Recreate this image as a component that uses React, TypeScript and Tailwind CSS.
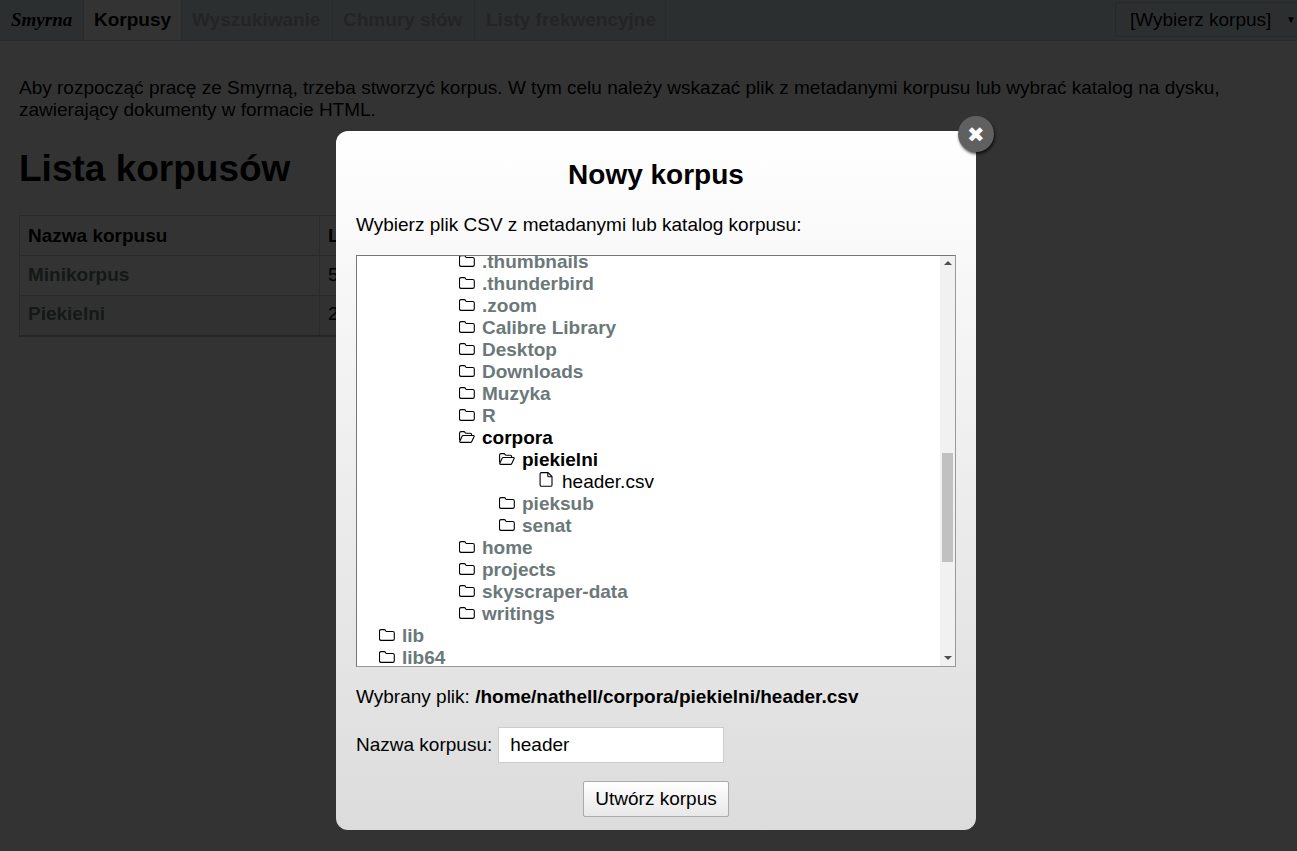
import React from "react";

const FolderIcon = () => (
  <svg width="16" height="12" viewBox="0 0 16 12" fill="none" stroke="#000" strokeWidth="1.1" className="shrink-0">
    <path d="M2 .6h3.2c.7 0 1 .3 1.4 1l.3.5c.2.3.4.4.8.4h6.1c.8 0 1.5.6 1.5 1.4v5.8c0 1-.7 1.7-1.6 1.7H2.2C1.2 11.4.5 10.700.5 9.800V2.100C.5 1.200 1.100.6 2 .6z" />
  </svg>
);

const OpenFolderIcon = () => (
  <svg width="16" height="12" viewBox="0 0 16 12" fill="none" stroke="#000" strokeWidth="1.1" className="shrink-0">
    <path d="M.6 9.600V1.900C.6 1.100 1.200.6 2 .6h2.800c.7 0 1 .3 1.300.9l.2.4c.1.3.4.4.7.4h4.300c.8 0 1.300.5 1.300 1.300v.9" />
    <path d="M.8 10.300l2.300-5c.2-.5.6-.8 1.200-.8h10.200c.6 0 .9.500.6 1.100l-2.300 4.900c-.2.5-.6.9-1.200.9H1.500c-.6 0-.9-.5-.7-1.100z" />
  </svg>
);

const FileIcon = () => (
  <svg width="16" height="15" viewBox="0 0 16 15" fill="none" stroke="#000" strokeWidth="1.1" className="shrink-0 -mt-[3px]">
    <path d="M2.500.6h6.500l4 4v8.300c0 .8-.6 1.400-1.400 1.400H2.500c-.8 0-1.400-.6-1.400-1.400V2c0-.8.6-1.400 1.400-1.400z" />
    <path d="M8.800.8v3c0 .6.4 1 1 1h3" />
  </svg>
);

type Row = { name: string; pad: string; kind: "closed" | "open" | "file" };

const rows: Row[] = [
  { name: ".thumbnails", pad: "pl-[102px]", kind: "closed" },
  { name: ".thunderbird", pad: "pl-[102px]", kind: "closed" },
  { name: ".zoom", pad: "pl-[102px]", kind: "closed" },
  { name: "Calibre Library", pad: "pl-[102px]", kind: "closed" },
  { name: "Desktop", pad: "pl-[102px]", kind: "closed" },
  { name: "Downloads", pad: "pl-[102px]", kind: "closed" },
  { name: "Muzyka", pad: "pl-[102px]", kind: "closed" },
  { name: "R", pad: "pl-[102px]", kind: "closed" },
  { name: "corpora", pad: "pl-[102px]", kind: "open" },
  { name: "piekielni", pad: "pl-[142px]", kind: "open" },
  { name: "header.csv", pad: "pl-[182px]", kind: "file" },
  { name: "pieksub", pad: "pl-[142px]", kind: "closed" },
  { name: "senat", pad: "pl-[142px]", kind: "closed" },
  { name: "home", pad: "pl-[102px]", kind: "closed" },
  { name: "projects", pad: "pl-[102px]", kind: "closed" },
  { name: "skyscraper-data", pad: "pl-[102px]", kind: "closed" },
  { name: "writings", pad: "pl-[102px]", kind: "closed" },
  { name: "lib", pad: "pl-[22px]", kind: "closed" },
  { name: "lib64", pad: "pl-[22px]", kind: "closed" },
];

const TreeRow = ({ row }: { row: Row }) => (
  <div className={`flex h-[22px] items-center gap-[7px] ${row.pad}`}>
    {row.kind === "closed" && <FolderIcon />}
    {row.kind === "open" && <OpenFolderIcon />}
    {row.kind === "file" && <FileIcon />}
    {row.kind === "closed" && <span className="pt-[2px] font-bold text-[#6b7879]">{row.name}</span>}
    {row.kind === "open" && <span className="pt-[2px] font-bold text-black">{row.name}</span>}
    {row.kind === "file" && <span className="pt-[2px] text-black">{row.name}</span>}
  </div>
);

const Nav = () => (
  <div className="flex h-[41px] justify-between border-b border-[#c6d2d4] bg-[#d9ebef] text-[19px] leading-[40px]">
    <div className="flex">
      <div className="w-[84px] border-r border-[#c6d2d4] pl-[11px] font-['Liberation_Serif',serif] font-bold italic">Smyrna</div>
      <div className="w-[98px] border-r border-[#c6d2d4] bg-white pl-[10px] font-bold">Korpusy</div>
      <div className="w-[151px] border-r border-[#c6d2d4] pl-[10px] font-bold text-[#a8b5b8]">Wyszukiwanie</div>
      <div className="w-[142px] border-r border-[#c6d2d4] pl-[10px] font-bold text-[#a8b5b8]">Chmury słów</div>
      <div className="w-[191px] border-r border-[#c6d2d4] pl-[11px] font-bold text-[#a8b5b8]">Listy frekwencyjne</div>
    </div>
    <div className="mt-[2px] flex h-[35px] w-[182px] items-center justify-between rounded-l-[2px] border border-r-0 border-[#bcc8ca] bg-[#d9ebef] pl-[14px] pr-[1px] leading-none">
      <span>[Wybierz korpus]</span>
      <span className="text-[10px]">▼</span>
    </div>
  </div>
);

const Page = () => (
  <div className="px-[19px] text-[19px] leading-[22px] text-black">
    <p className="pt-[36px]">
      Aby rozpocząć pracę ze Smyrną, trzeba stworzyć korpus. W tym celu należy wskazać plik z metadanymi korpusu lub wybrać katalog na dysku, zawierający dokumenty w formacie HTML.
    </p>
    <h1 className="mt-[26px] text-[37px] font-bold leading-[44px]">Lista korpusów</h1>
    <table className="mt-[24px] w-[800px] table-fixed border-collapse">
      <thead>
        <tr className="h-[40px]">
          <th className="w-[300px] border border-[#cfcfcf] pl-[8px] text-left font-bold">Nazwa korpusu</th>
          <th className="border border-[#cfcfcf] pl-[8px] text-left font-bold">Liczba dokumentów</th>
        </tr>
      </thead>
      <tbody>
        <tr className="h-[40px]">
          <td className="border border-[#cfcfcf] pb-[2px] pl-[8px] font-bold text-[#6b7879]">Minikorpus</td>
          <td className="border border-[#cfcfcf] pb-[2px] pl-[8px]">5</td>
        </tr>
        <tr className="h-[40px] bg-[#f6f6f6]">
          <td className="border border-[#cfcfcf] border-b-2 border-b-[#bdbdbd] pb-[2px] pl-[8px] font-bold text-[#6b7879]">Piekielni</td>
          <td className="border border-[#cfcfcf] border-b-2 border-b-[#bdbdbd] pb-[2px] pl-[8px]">2</td>
        </tr>
      </tbody>
    </table>
  </div>
);

const Scrollbar = () => (
  <div className="flex w-[15px] shrink-0 flex-col items-center bg-[#f1f1f1]">
    <div className="mt-[5px] h-0 w-0 border-x-[4px] border-b-[4px] border-x-transparent border-b-[#505050]" />
    <div className="mt-[188px] h-[109px] w-[11px] bg-[#c1c1c1]" />
    <div className="mt-[94px] h-0 w-0 border-x-[4px] border-t-[4px] border-x-transparent border-t-[#505050]" />
  </div>
);

const Modal = () => (
  <div className="absolute left-[336px] top-[131px] h-[699px] w-[640px] rounded-[12px] bg-gradient-to-b from-white to-[#dcdcdc] px-[20px] text-[19px] leading-[22px] text-black">
    <button className="absolute -right-[18px] -top-[15px] flex h-[36px] w-[36px] items-center justify-center rounded-full bg-[#606060] text-[21px] leading-none text-white shadow-[1px_2px_3px_rgba(0,0,0,0.7)]">
      ✖
    </button>
    <h2 className="pt-[27px] text-center text-[28px] font-bold leading-[33px]">Nowy korpus</h2>
    <p className="mt-[23px]">Wybierz plik CSV z metadanymi lub katalog korpusu:</p>
    <div className="mt-[19px] flex h-[412px] border border-[#777] border-r-[#999] border-b-[#999] bg-white">
      <div className="min-w-0 flex-1 overflow-hidden">
        <div className="-mt-[6px]">
          {rows.map((row) => (
            <TreeRow key={row.name} row={row} />
          ))}
        </div>
      </div>
      <Scrollbar />
    </div>
    <p className="mt-[19px]">
      Wybrany plik: <strong className="font-bold">/home/nathell/corpora/piekielni/header.csv</strong>
    </p>
    <div className="mt-[19px] flex items-center gap-[6px]">
      <label>Nazwa korpusu:</label>
      <div className="flex h-[36px] w-[226px] items-center border border-[#ccc] bg-white pl-[11px]">header</div>
    </div>
    <div className="mt-[18px] flex justify-center">
      <button className="h-[36px] w-[146px] rounded-[2px] border border-[#aaa] bg-gradient-to-b from-white to-[#e8e8e8] pb-[2px] text-[19px] leading-none text-black">
        Utwórz korpus
      </button>
    </div>
  </div>
);

export default function App() {
  return (
    <div className="relative h-[851px] w-full overflow-hidden bg-white font-['Liberation_Sans',Arial,sans-serif]">
      <Nav />
      <Page />
      {/* overlay */}
      <div className="absolute inset-0 bg-black/80" />
      <Modal />
    </div>
  );
}
